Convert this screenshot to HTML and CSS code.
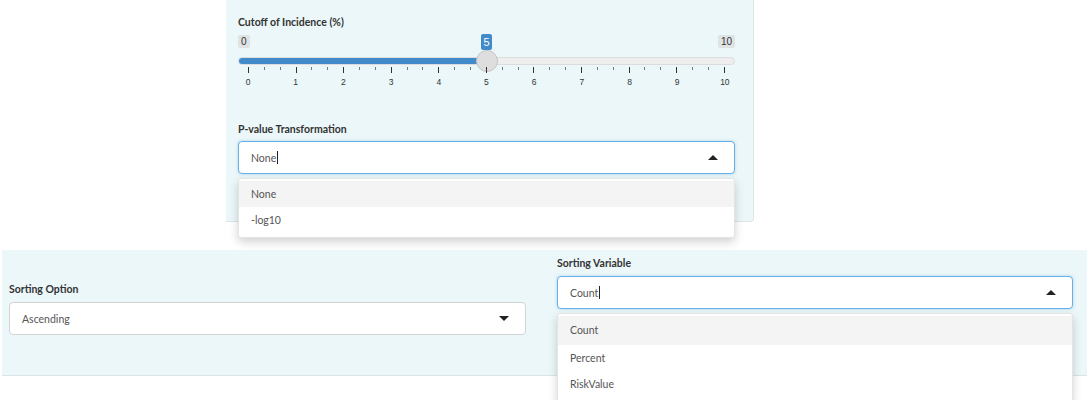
FILE: index.html
```html
<!DOCTYPE html>
<html>
<head>
<meta charset="utf-8">
<link rel="stylesheet" href="styles.css">
</head>
<body>
<div class="top-panel">
  <div class="field">
    <div class="label">Cutoff of Incidence (%)</div>
    <div class="slider">
      <div class="mm-row">
        <span class="mm">0</span>
        <span class="mm">10</span>
      </div>
      <div class="track"><div class="fill"></div></div>
      <div class="handle"></div>
      <div class="bubble">5</div>
      <div class="ticks">
        <i></i><i></i><i></i><i></i><i></i><i></i><i></i><i></i><i></i><i></i><i></i>
        <i></i><i></i><i></i><i></i><i></i><i></i><i></i><i></i><i></i><i></i>
        <i></i><i></i><i></i><i></i><i></i><i></i><i></i><i></i><i></i><i></i>
      </div>
      <div class="tick-labels">
        <span>0</span><span>1</span><span>2</span><span>3</span><span>4</span><span>5</span><span>6</span><span>7</span><span>8</span><span>9</span><span>10</span>
      </div>
    </div>
  </div>
  <div class="field field-pv">
    <div class="label">P-value Transformation</div>
    <div class="select focus">
      <span class="val">None<span class="caret"></span></span>
      <span class="arrow up"></span>
      <div class="dropdown">
        <div class="opt active">None</div>
        <div class="opt">-log10</div>
      </div>
    </div>
  </div>
</div>

<div class="bottom-panel">
  <div class="col col-left">
    <div class="label">Sorting Option</div>
    <div class="select">
      <span class="val">Ascending</span>
      <span class="arrow down"></span>
    </div>
  </div>
  <div class="col col-right">
    <div class="label">Sorting Variable</div>
    <div class="select focus">
      <span class="val">Count<span class="caret"></span></span>
      <span class="arrow up"></span>
      <div class="dropdown">
        <div class="opt active">Count</div>
        <div class="opt">Percent</div>
        <div class="opt">RiskValue</div>
      </div>
    </div>
  </div>
</div>
</body>
</html>
```
FILE: styles.css
```css
* { box-sizing: border-box; }
html, body {
  margin: 0;
  padding: 0;
  background: #fff;
  width: 1087px;
  height: 400px;
  overflow: hidden;
  font-family: "Lato", "Noto Sans", sans-serif;
  color: #333;
}
.top-panel {
  margin-left: 226px;
  width: 528px;
  height: 222px;
  background: #ebf7f8;
  border-right: 1px solid #dbe6e7;
  border-bottom: 1px solid #dbe6e7;
  border-bottom-right-radius: 4px;
  padding: 16px 18px 0 12px;
}
.label {
  font-size: 10.5px;
  font-weight: bold;
  color: #333;
  line-height: 12px;
  height: 12px;
}
.slider {
  position: relative;
  height: 80px;
  margin-top: 6px;
}
.mm-row {
  display: flex;
  justify-content: space-between;
  padding-top: 1px;
}
.mm {
  background: #dfe3e4;
  color: #333;
  font-size: 10px;
  line-height: 13px;
  height: 13px;
  padding: 0 3px;
  border-radius: 2px;
  font-family: "Liberation Sans", Arial, sans-serif;
}
.track {
  position: absolute;
  left: 0;
  right: 0;
  top: 23px;
  height: 8px;
  border-radius: 4px;
  background: #eeeeee;
  border: 1px solid #dcdcdc;
  overflow: hidden;
}
.fill {
  width: 248px;
  height: 100%;
  background: #428bca;
}
.handle {
  position: absolute;
  left: 238px;
  top: 16px;
  width: 22px;
  height: 22px;
  border-radius: 50%;
  background: #dedede;
  border: 1px solid #c4c4c4;
}
.bubble {
  position: absolute;
  left: 243px;
  top: 0;
  width: 11px;
  height: 16px;
  border-radius: 2px;
  background: #428bca;
  color: #fff;
  font-family: "Liberation Sans", Arial, sans-serif;
  font-size: 11px;
  line-height: 16px;
  text-align: center;
}
.ticks {
  position: absolute;
  left: 10px;
  width: 477px;
  top: 33px;
  height: 7px;
  display: flex;
  justify-content: space-between;
  align-items: flex-start;
}
.ticks i {
  display: block;
  width: 1px;
  height: 3px;
  background: #777;
}
.ticks i:nth-child(3n+1) {
  height: 6px;
  background: #333;
}
.tick-labels {
  position: absolute;
  left: 0;
  width: 497px;
  top: 43px;
  display: flex;
  justify-content: space-between;
}
.tick-labels span {
  width: 20px;
  text-align: center;
  font-family: "Liberation Sans", Arial, sans-serif;
  font-size: 8.5px;
  color: #333;
}
.field-pv {
  margin-top: 9px;
}
.select {
  position: relative;
  margin-top: 6px;
  height: 33px;
  background: #fff;
  border: 1px solid #cfd4d6;
  border-radius: 4px;
  display: flex;
  align-items: center;
  justify-content: space-between;
  padding: 0 16px 0 12px;
}
.select.focus {
  border-color: #66afe9;
  box-shadow: 0 0 3px rgba(102, 175, 233, 0.5);
}
.val {
  font-size: 10.5px;
  color: #555;
  display: flex;
  align-items: center;
}
.caret {
  display: inline-block;
  width: 1px;
  height: 13px;
  background: #222;
  margin-left: 1px;
}
.arrow {
  width: 0;
  height: 0;
  border-left: 5px solid transparent;
  border-right: 5px solid transparent;
}
.arrow.up { border-bottom: 5px solid #222; }
.arrow.down { border-top: 5px solid #222; }
.dropdown {
  position: absolute;
  left: -1px;
  right: -1px;
  top: 36px;
  background: #fff;
  border: 1px solid #e4e4e4;
  border-radius: 3px;
  box-shadow: 0 4px 10px rgba(0, 0, 0, 0.18);
  padding: 2px 0 4px;
  z-index: 5;
}
.opt {
  height: 26px;
  line-height: 26px;
  padding-left: 12px;
  font-size: 10.5px;
  color: #555;
}
.opt.active {
  background: #f4f4f4;
}
.bottom-panel {
  margin-top: 28px;
  margin-left: 2px;
  height: 126px;
  background: #ebf7f8;
  border-bottom: 1px solid #dde4e5;
  display: grid;
  grid-template-columns: 517px 516px;
  column-gap: 31px;
  padding-left: 7px;
}
.col-left { padding-top: 33px; }
.col-right { padding-top: 7px; }
.col-left .select { border-color: #d3d3d3; margin-top: 7px; }
.col-right .select { margin-top: 7px; }
.col-right .dropdown { top: 36px; }
.col-right .opt { height: 26px; line-height: 26px; }
.col-right .opt.active { height: 29px; line-height: 29px; }
```
